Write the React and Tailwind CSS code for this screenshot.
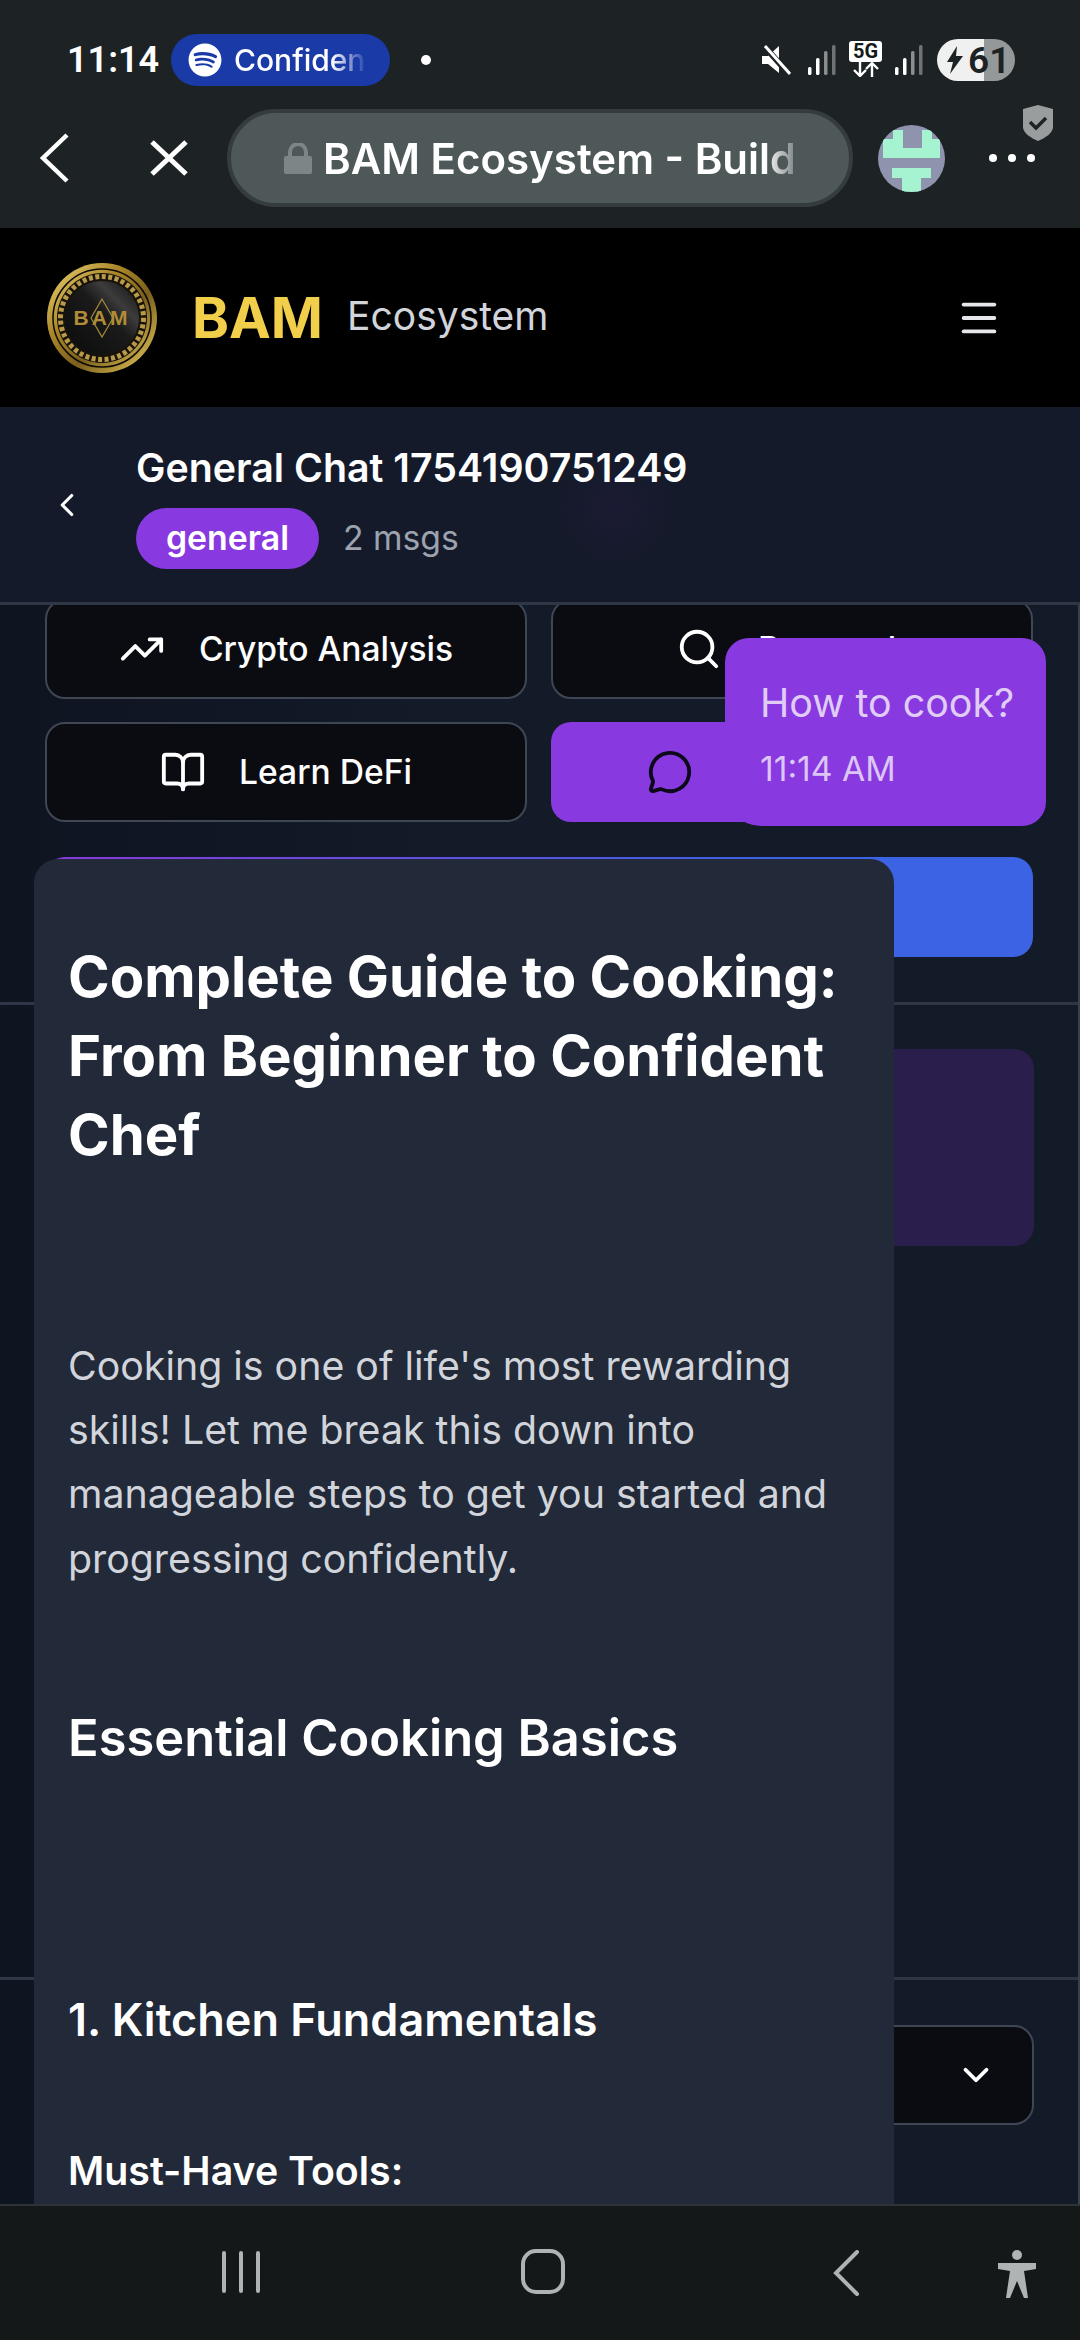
import { BookOpen, ChevronDown, ChevronLeft, Menu, MessageCircle, Search, TrendingUp, X } from 'lucide-react';
import { FaSpotify } from 'react-icons/fa';

function Signal() {
    return (
        <svg width="28" height="30" viewBox="0 0 28 30">
            <rect x="0" y="22" width="3.5" height="8" rx="1.5" fill="#fff" />
            <rect x="8" y="13" width="3.5" height="17" rx="1.5" fill="#fff" />
            <rect x="16" y="6" width="3.5" height="24" rx="1.5" fill="#8a8e8f" />
            <rect x="24" y="0" width="3.5" height="30" rx="1.5" fill="#6f7374" />
        </svg>
    );
}

function StatusBar() {
    return (
        <div className="h-[52px] mt-[34px] flex items-center font-[Roboto,sans-serif]">
            <span className="ml-[67px] w-[104px] text-[36px] font-semibold text-white">11:14</span>
            <div className="w-[219px] h-[52px] rounded-full bg-[#1a3aa8] flex items-center pl-[17px] gap-[12px] text-white">
                <FaSpotify size={34} />
                <span className="w-[136px] overflow-hidden whitespace-nowrap text-[30px] font-medium font-[Inter,sans-serif] [mask-image:linear-gradient(to_right,#fff_72%,transparent_98%)]">Confidence</span>
            </div>
            <div className="ml-[31px] w-[10px] h-[10px] rounded-full bg-white" />

            <svg className="ml-[330px]" width="30" height="30" viewBox="0 0 30 30">
                <path d="M1 11h6l11-10v27L7 19H1z" fill="#fff" />
                <path d="M3 1l25 28" stroke="#1d2324" strokeWidth="6" />
                <path d="M4 1l25 28" stroke="#fff" strokeWidth="3" />
            </svg>
            <div className="ml-[17px]"><Signal /></div>
            <div className="ml-[13px] w-[33px] flex flex-col items-center mt-[-3px]">
                <div className="w-[33px] h-[21px] rounded-[3px] bg-white text-[#15191a] text-[20px] leading-[21px] font-bold text-center">5G</div>
                <svg width="28" height="15" viewBox="0 0 28 15" fill="none" stroke="#fff" strokeWidth="2.4">
                    <path d="M8 0v13M2 8l6 6 6-6" />
                    <path d="M20 15V2M14 7l6-6 6 6" />
                </svg>
            </div>
            <div className="ml-[13px]"><Signal /></div>
            <div className="ml-[14px] w-[78px] h-[42px] rounded-full bg-[linear-gradient(to_right,#f0f0f0_60%,#949899_60%)] flex items-center pl-[10px] gap-[5px] text-[#1d2324]">
                <svg width="16" height="28" viewBox="0 0 16 28"><path d="M10 0L0 16h6l-3 12L16 10H9z" fill="#1d2324" /></svg>
                <span className="text-[37px] leading-none font-semibold">61</span>
            </div>
        </div>
    );
}

function BrowserBar() {
    return (
        <div className="relative mt-[23px] h-[98px] flex items-center">
            <svg className="ml-[38px]" width="32" height="50" viewBox="0 0 32 50" fill="none" stroke="#fff" strokeWidth="4.5">
                <path d="M29 2L5 25l24 23" />
            </svg>
            <svg className="ml-[80px]" width="38" height="36" viewBox="0 0 38 36" fill="none" stroke="#fff" strokeWidth="5">
                <path d="M2 2l34 32M36 2L2 34" />
            </svg>
            <div className="ml-[39px] w-[626px] h-[98px] rounded-full bg-[#4f5859] border-[4px] border-[#353c3d] flex items-center pl-[53px]">
                <svg width="28" height="31" viewBox="0 0 28 31">
                    <path d="M6 14V9a8 8 0 0116 0v5" fill="none" stroke="#7c8686" strokeWidth="4" />
                    <rect x="0" y="13" width="28" height="18" rx="2" fill="#7c8686" />
                </svg>
                <span className="ml-[11px] w-[470px] overflow-hidden whitespace-nowrap text-[42px] font-semibold text-white [mask-image:linear-gradient(to_right,#fff_94%,#fff5_100%)]">BAM Ecosystem - Building</span>
            </div>
            <svg className="ml-[25px] rounded-full" width="67" height="67" viewBox="0 0 67 67">
                <rect width="67" height="67" fill="#8f93ae" />
                <path d="M15 5h10v18h19V5h10v9h8v19H5V14h10z" fill="#a5f3d0" />
                <path d="M14 43h39v10H43v14H24V53H14z" fill="#a5f3d0" />
            </svg>
            <div className="ml-[44px] flex gap-[11px]">
                <div className="w-[8px] h-[8px] rounded-full bg-white" />
                <div className="w-[8px] h-[8px] rounded-full bg-white" />
                <div className="w-[8px] h-[8px] rounded-full bg-white" />
            </div>
            {/* badge on top of the menu dots */}
            <svg className="absolute left-[1023px] top-[-4px]" width="30" height="36" viewBox="0 0 30 36">
                <path d="M15 0l15 4v18c0 6-8 11-15 14C8 33 0 28 0 22V4z" fill="#9a9d9e" />
                <path d="M7 17l6 6 10-10" fill="none" stroke="#1d2324" strokeWidth="3.4" />
            </svg>
        </div>
    );
}

function Logo() {
    return (
        <svg width="110" height="110" viewBox="0 0 110 110">
            <defs>
                <linearGradient id="gold" x1="0" y1="0" x2="1" y2="1">
                    <stop offset="0" stopColor="#f0d878" />
                    <stop offset="0.35" stopColor="#a98628" />
                    <stop offset="0.6" stopColor="#7a5f1c" />
                    <stop offset="1" stopColor="#f0d060" />
                </linearGradient>
                <linearGradient id="core" x1="0" y1="1" x2="1" y2="0">
                    <stop offset="0" stopColor="#0b0b0b" />
                    <stop offset="0.55" stopColor="#1a1a1a" />
                    <stop offset="0.72" stopColor="#3c3c3c" />
                    <stop offset="1" stopColor="#0d0d0d" />
                </linearGradient>
            </defs>
            <circle cx="55" cy="55" r="55" fill="url(#gold)" />
            <circle cx="55" cy="55" r="49" fill="none" stroke="#0c0a05" strokeWidth="1.5" />
            <circle cx="55" cy="55" r="45" fill="#17130a" />
            <circle cx="55" cy="55" r="41.5" fill="none" stroke="#b89a48" strokeWidth="5" strokeDasharray="4 2.5" />
            <circle cx="55" cy="55" r="37" fill="url(#core)" />
            <path d="M55 36l11 19-11 19-11-19z" fill="none" stroke="#a98a3a" strokeWidth="1.2" />
            <text x="55" y="62" textAnchor="middle" fontFamily="Liberation Sans, sans-serif" fontSize="21" fontWeight="700" fill="#b08c36" letterSpacing="3">BAM</text>
        </svg>
    );
}

function ActionButton({ icon: Icon, label, iconSize, gap }) {
    return (
        <button className="h-[100px] rounded-[20px] border-[2px] bg-[#0a0c12] border-[#3f4654] text-white flex items-center justify-center text-[33.6px] font-medium" style={{ gap }}>
            <Icon size={iconSize} color="#ffffff" strokeWidth={2} />
            <span>{label}</span>
        </button>
    );
}

export default function App() {
    return (
        <div className="relative w-[1080px] h-[2340px] overflow-hidden flex flex-col bg-[#131a28] font-[Inter,sans-serif]">
            <div className="h-[228px] shrink-0 bg-[#1d2324]">
                <StatusBar />
                <BrowserBar />
            </div>

            <header className="h-[179px] shrink-0 bg-black flex items-center pl-[47px]">
                <Logo />
                <span className="ml-[35px] text-[56px] font-bold text-[#f2cf4a]">BAM</span>
                <span className="ml-[24px] mb-[2px] text-[39px] text-[#d1d5db]">Ecosystem</span>
                <Menu className="ml-auto mr-[78px]" size={46} color="#e5e7eb" strokeWidth={2} />
            </header>

            <div className="h-[198px] shrink-0 flex items-center bg-[#141a2a] bg-[radial-gradient(circle_at_57%_52%,#1b1b33_0,transparent_10%)] border-b-[3px] border-[#2f3747] pl-[48px]">
                <ChevronLeft size={38} color="#ffffff" strokeWidth={2} />
                <div className="ml-[50px] mt-[-3px]">
                    <h2 className="text-[39.3px] leading-[60px] font-semibold text-white">General Chat 1754190751249</h2>
                    <div className="mt-[10px] flex items-center gap-[24px]">
                        <span className="w-[183px] h-[61px] rounded-full bg-[#8839e0] flex items-center justify-center text-[33.8px] font-semibold text-white">general</span>
                        <span className="text-[33.7px] text-[#9ca3af]">2 msgs</span>
                    </div>
                </div>
            </div>

            <div className="flex-1 min-h-0 flex flex-col border-r-[2px] border-[#374151] bg-[linear-gradient(to_right,#0e1420,#131a28_40%)]">
                <div className="h-[400px] shrink-0 overflow-hidden pl-[45px] pr-[45px] border-b-[3px] border-[#2f3747]">
                    <div className="grid grid-cols-2 gap-x-[24px] gap-y-[23px] mt-[-6px]">
                        <ActionButton icon={TrendingUp} label="Crypto Analysis" iconSize={46} gap={34} />
                        <ActionButton icon={Search} label="Research" iconSize={46} gap={36} />
                        <ActionButton icon={BookOpen} label="Learn DeFi" iconSize={46} gap={33} />
                        <button className="h-[100px] rounded-[20px] bg-[#8839e0] flex items-center pl-[96px]">
                            <MessageCircle size={46} color="#0c0a1a" strokeWidth={2} />
                        </button>
                    </div>
                    <div className="mt-[35px] h-[100px] rounded-[20px] bg-[linear-gradient(to_right,#8839e0,#3b63e3_75%)]" />
                </div>

                <div className="h-[975px] shrink-0 border-b-[3px] border-[#2f3747] pt-[44px] pr-[44px] flex justify-end">
                    <div className="w-[800px] h-[197px] rounded-[20px] bg-[#2a1e4d]" />
                </div>

                <div className="flex-1 min-h-0 pl-[45px] pr-[44px] pt-[45px]">
                    <div className="h-[100px] rounded-[20px] bg-[#0a0c12] border-[2px] border-[#3f4654] flex items-center justify-end pr-[35px]">
                        <ChevronDown size={42} color="#ffffff" strokeWidth={2.2} />
                    </div>
                </div>
            </div>

            <nav className="h-[136px] shrink-0 bg-[#141818] border-t-[2px] border-[#2e3436] flex items-start z-20 relative">
                <svg className="ml-[222px] mt-[45px]" width="38" height="42" viewBox="0 0 38 42" fill="#b0b3b3">
                    <rect x="0" y="0" width="4" height="42" rx="2" />
                    <rect x="17" y="0" width="4" height="42" rx="2" />
                    <rect x="34" y="0" width="4" height="42" rx="2" />
                </svg>
                <div className="ml-[261px] mt-[43px] w-[44px] h-[45px] rounded-[15px] border-[4px] border-[#b0b3b3]" />
                <svg className="ml-[268px] mt-[44px]" width="26" height="46" viewBox="0 0 26 46" fill="none" stroke="#b0b3b3" strokeWidth="4" strokeLinecap="round">
                    <path d="M24 2L3 23l21 21" />
                </svg>
                <svg className="ml-[139px] mt-[44px]" width="38" height="48" viewBox="0 0 38 48" fill="#b0b3b3">
                    <circle cx="19" cy="5" r="5" />
                    <path d="M0 13h38v6l-12 2 4 27h-4l-7-17-7 17H8l4-27-12-2z" />
                </svg>
            </nav>

            {/* user bubble floating over the quick actions */}
            <div className="absolute left-[725px] top-[638px] w-[321px] h-[188px] rounded-[24px] rounded-bl-[36px] bg-[#8839e0] z-10 pl-[35px] pt-[40px]">
                <p className="text-[39.4px] leading-[50px] text-[#e0cdf6]">How to cook?</p>
                <p className="mt-[16px] text-[33.7px] leading-[50px] text-[#dcc6f5]">11:14 AM</p>
            </div>

            {/* assistant reply floating over everything, cut off by the nav bar */}
            <div className="absolute left-[34px] top-[859px] w-[860px] h-[1345px] overflow-hidden rounded-t-[24px] bg-[#222938] z-10 pl-[34px] pr-[20px] pt-[78px]">
                <h1 className="text-[56.3px] leading-[79px] font-bold text-white">Complete Guide to Cooking: From Beginner to Confident Chef</h1>
                <p className="mt-[160px] text-[39.3px] leading-[64.2px] text-[#d1d5db]">Cooking is one of life's most rewarding skills! Let me break this down into manageable steps to get you started and progressing confidently.</p>
                <h2 className="mt-[112px] text-[50.6px] leading-[70px] font-semibold text-white">Essential Cooking Basics</h2>
                <h3 className="mt-[217px] text-[45px] leading-[60px] font-semibold text-white">1. Kitchen Fundamentals</h3>
                <h4 className="mt-[91px] text-[39.3px] leading-[60px] font-semibold text-white">Must-Have Tools:</h4>
            </div>
        </div>
    );
}
